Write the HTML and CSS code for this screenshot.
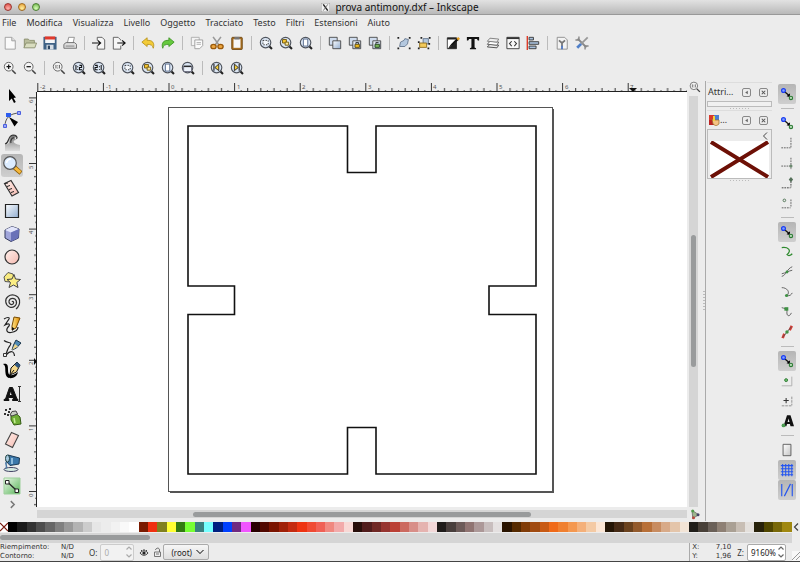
FILE: index.html
```html
<!DOCTYPE html>
<html lang="it">
<head>
<meta charset="utf-8">
<title>prova antimony.dxf – Inkscape</title>
<link rel="stylesheet" href="styles.css">
</head>
<body>
<svg class="sprite" aria-hidden="true">
  <defs>
    <linearGradient id="g-blue" x1="0" y1="0" x2="1" y2="1"><stop offset="0" stop-color="#fbfdff"/><stop offset="1" stop-color="#93aed0"/></linearGradient>
    <linearGradient id="g-grey" x1="0" y1="0" x2="1" y2="1"><stop offset="0" stop-color="#fff"/><stop offset="1" stop-color="#c4c4c4"/></linearGradient>
    <linearGradient id="g-pink" x1="0" y1="0" x2="1" y2="1"><stop offset="0" stop-color="#fff1ec"/><stop offset="1" stop-color="#f5b9b0"/></linearGradient>
    <linearGradient id="g-green" x1="0" y1="0" x2="1" y2="1"><stop offset="0" stop-color="#ecf8e9"/><stop offset="1" stop-color="#58b558"/></linearGradient>
    <linearGradient id="g-tweak" x1="0" y1="0" x2="0" y2="1"><stop offset="0" stop-color="#777"/><stop offset="1" stop-color="#ddd"/></linearGradient>
    <linearGradient id="g-pen" x1="0" y1="0" x2="1" y2="0"><stop offset="0" stop-color="#ffe58a"/><stop offset="1" stop-color="#e08a00"/></linearGradient>
  </defs>

  <symbol id="i-new" viewBox="0 0 16 16"><path d="M2.500 1.500H10L14 5.500V15H2.500Z" fill="#fafafa" stroke="#999"/><path d="M10 1.500V5.500H14" fill="#ddd" stroke="#999"/></symbol>
  <symbol id="i-open" viewBox="0 0 16 16"><path d="M1.500 13V3.500H6L7.500 5H13V8" fill="#b9bd9c" stroke="#888d6c"/><path d="M3.500 8H15.500L13.500 13.500H1Z" fill="#d9ddbf" stroke="#888d6c"/></symbol>
  <symbol id="i-save" viewBox="0 0 16 16"><path d="M0.500 1H15.500V15.500H0.500Z" fill="#3f6286"/><path d="M2.500 1H13.500V8H2.500Z" fill="#f4f6f8"/><path d="M2 0.500H14V4H2Z" fill="#e03a2c"/><path d="M4 10H12V15.500H4Z" fill="#d5dde5"/><path d="M5.500 11H8V15H5.500Z" fill="#2d4663"/></symbol>
  <symbol id="i-print" viewBox="0 0 16 16"><path d="M5 8L6.500 1.500H13L11.500 8" fill="#fff" stroke="#888"/><path d="M1 9.500L3.500 7.500H13L15.500 9.500V14H1Z" fill="#ddd" stroke="#666"/><path d="M3 11.500H13" stroke="#777"/></symbol>
  <symbol id="i-import" viewBox="0 0 16 16"><path d="M6 5V1.500H11.500L14.500 4.500V15H6V11" fill="#f6f6f6" stroke="#555"/><path d="M0 8H9M6.500 5L9.800 8L6.500 11" fill="none" stroke="#111" stroke-width="1.400"/></symbol>
  <symbol id="i-export" viewBox="0 0 16 16"><path d="M10 5V4.500L7 1.500H1.500V15H10V11" fill="#f6f6f6" stroke="#555"/><path d="M6 8H14M11.500 5L15 8L11.500 11" fill="none" stroke="#111" stroke-width="1.400"/></symbol>
  <symbol id="i-undo" viewBox="0 0 16 16"><path d="M1 7L7 2V5C13 4.500 16 8 14 14C13.500 10.500 11 9.500 7 9.500V12Z" fill="#f3cb37" stroke="#b8921c"/></symbol>
  <symbol id="i-redo" viewBox="0 0 16 16"><path d="M15 7L9 2V5C3 4.500 0 8 2 14C2.500 10.500 5 9.500 9 9.500V12Z" fill="#66c93e" stroke="#3f9525"/></symbol>
  <symbol id="i-copy" viewBox="0 0 16 16"><path d="M1.500 1.500H10.500V11H1.500Z" fill="#f4f4f4" stroke="#aaa"/><path d="M5.500 4.500H14.500V11L11 14.500H5.500Z" fill="#fbfbfb" stroke="#999"/><path d="M7.500 7.500H12.500M7.500 9.500H12.500" stroke="#aaa"/></symbol>
  <symbol id="i-cut" viewBox="0 0 16 16"><path d="M3.500 1L10 10M12.500 1L6 10" stroke="#999" stroke-width="1.800"/><ellipse cx="4" cy="12" rx="3" ry="2.500" fill="#eca640" stroke="#9a5a0c" stroke-width="1.500"/><ellipse cx="12" cy="12" rx="3" ry="2.500" fill="#eca640" stroke="#9a5a0c" stroke-width="1.500"/></symbol>
  <symbol id="i-paste" viewBox="0 0 16 16"><rect x="2" y="1.500" width="12" height="14" rx="1" fill="#a86e1f" stroke="#6d450f"/><path d="M4 3.500H12V13.500H4Z" fill="#f7f7f7"/><path d="M5 1H11V4H5Z" fill="#777"/></symbol>

  <symbol id="i-lens" viewBox="0 0 16 16"><path d="M11.500 11.500L14.800 14.800" stroke="#222" stroke-width="2.400"/><circle cx="7.500" cy="7.500" r="6" fill="#dbe6f4" stroke="#50555e" stroke-width="1.300"/></symbol>
  <symbol id="i-lens-light" viewBox="0 0 16 16"><path d="M10.500 10.500L14.500 14.500" stroke="#444" stroke-width="1.800"/><circle cx="6.500" cy="6.500" r="5" fill="#f4f4f4" stroke="#666" stroke-width="1.100"/></symbol>
  <symbol id="i-zsel" viewBox="0 0 16 16"><use href="#i-lens"/><rect x="4.500" y="5" width="6" height="5" fill="#f5f8fc" stroke="#222" stroke-dasharray="1.500 1.500"/></symbol>
  <symbol id="i-zdraw" viewBox="0 0 16 16"><use href="#i-lens"/><path d="M4 4H8.500V8H4Z" fill="#f4c330" stroke="#6e560d"/><path d="M7 7H11V10.500H7Z" fill="#fbe89a" stroke="#6e560d"/></symbol>
  <symbol id="i-zpage" viewBox="0 0 16 16"><use href="#i-lens"/><path d="M5 3.500H10V11.500H5Z" fill="#fff" stroke="#4b6186"/></symbol>
  <symbol id="i-zwidth" viewBox="0 0 16 16"><use href="#i-lens"/><path d="M3 6.500H12V12H3Z" fill="#edf3fb" stroke="#667"/><path d="M3 6H12" stroke="#222" stroke-width="1.500"/></symbol>
  <symbol id="i-zin" viewBox="0 0 16 16"><use href="#i-lens-light"/><path d="M4 6.500H9M6.500 4V9" stroke="#111" stroke-width="1.400"/></symbol>
  <symbol id="i-zout" viewBox="0 0 16 16"><use href="#i-lens-light"/><path d="M4 6.500H9" stroke="#111" stroke-width="1.400"/></symbol>
  <symbol id="i-z11" viewBox="0 0 16 16"><use href="#i-lens-light"/><path d="M4.500 4.500V8.500M8.500 4.500V8.500M6.500 5V6M6.500 7.500V8.500" stroke="#555"/></symbol>
  <symbol id="i-z12" viewBox="0 0 16 16"><use href="#i-lens"/><path d="M4.500 4.500V10.500M6.500 6V7M6.500 9V10M8.500 5H11V7.500H8.500V10H11.500" fill="none" stroke="#111" stroke-width="1.200"/></symbol>
  <symbol id="i-z21" viewBox="0 0 16 16"><use href="#i-lens"/><path d="M3.500 5H6V7.500H3.500V10H6.500M8.500 6V7M8.500 9V10M10.500 4.500V10.500" fill="none" stroke="#111" stroke-width="1.200"/></symbol>
  <symbol id="i-zprev" viewBox="0 0 16 16"><use href="#i-lens"/><path d="M10 3.500V11L5.500 7.500Z" fill="#f5cf3a" stroke="#222"/><path d="M4.500 3.500V11" stroke="#222" stroke-width="1.300"/></symbol>
  <symbol id="i-znext" viewBox="0 0 16 16"><use href="#i-lens"/><path d="M5 3.500V11L9.500 7.500Z" fill="#f5cf3a" stroke="#222"/><path d="M10.500 3.500V11" stroke="#222" stroke-width="1.300"/></symbol>

  <symbol id="i-dup" viewBox="0 0 16 16"><path d="M1.500 1.500H10.500V10.500H1.500Z" fill="#cfdcee" stroke="#444"/><path d="M5.500 5.500H14.500V14.500H5.500Z" fill="url(#g-blue)" stroke="#444"/></symbol>
  <symbol id="i-clone" viewBox="0 0 16 16"><use href="#i-dup"/><path d="M8 9.500H13V13H8Z" fill="#f0bc1c" stroke="#5c4709"/><path d="M9 9V7.500H12V9" fill="none" stroke="#222"/></symbol>
  <symbol id="i-unlink" viewBox="0 0 16 16"><use href="#i-dup"/><path d="M8 9.500H13V13H8Z" fill="#77b558" stroke="#24421a"/><path d="M9 9V7.500H12" fill="none" stroke="#222"/></symbol>
  <symbol id="i-group" viewBox="0 0 16 16"><path d="M3 12L4 7L8 5L9 3L13 4L12 9L9 12Z" fill="#b4c8df" stroke="#60728a"/><path d="M0.500 1H2.500V3H0.500ZM13.500 1H15.500V3H13.500ZM0.500 13H2.500V15H0.500ZM13.500 13H15.500V15H13.500Z" fill="#222"/></symbol>
  <symbol id="i-ungroup" viewBox="0 0 16 16"><path d="M7 3H13V9H7Z" fill="#b4c8df" stroke="#60728a"/><path d="M3 8H11V13H3Z" fill="#f2ca5c" stroke="#8c6a1a"/><path d="M1 6H3V8H1ZM4 1H6V3H4ZM13.500 1H15.500V3H13.500ZM1 13H3V15H1ZM12 13H14V15H12ZM13 8H15V10H13Z" fill="#222"/></symbol>
  <symbol id="i-fill" viewBox="0 0 16 16"><path d="M1.500 2H12V14.500H1.500Z" fill="#fff" stroke="#333"/><path d="M1.500 14.500L12 6V14.500ZM1.500 2H12V4H1.500Z" fill="#222"/><path d="M3 13L6 9L13 2L15 4L8 10Z" fill="#111"/><path d="M12 3L14 1L16 3L14 5Z" fill="#e9a427"/></symbol>
  <symbol id="i-text" viewBox="0 0 16 16"><path d="M1 1H15V5H13.500L12.500 3.500H9.800V13L11.500 14V15H4.500V14L6.200 13V3.500H3.500L2.500 5H1Z" fill="#111"/></symbol>
  <symbol id="i-layers" viewBox="0 0 16 16"><path d="M4.500 9.500L14.500 10.500L12.500 13.500L1.500 12.500Z" fill="#eee" stroke="#444"/><path d="M4.500 6L14.500 7L12.500 10.500L1.500 9.500Z" fill="#fff" stroke="#555"/><path d="M4.500 2.500L14.500 3.500L12.500 7L1.500 6Z" fill="#eee" stroke="#777"/></symbol>
  <symbol id="i-xml" viewBox="0 0 16 16"><path d="M1 1.500H15V14.500H1Z" fill="#f7f7f7" stroke="#333"/><path d="M1 2.500H15" stroke="#333" stroke-width="2"/><path d="M6.500 6L4 8.700L6.500 11.500M9.500 6L12 8.700L9.500 11.500" fill="none" stroke="#333" stroke-width="1.200"/></symbol>
  <symbol id="i-align" viewBox="0 0 16 16"><path d="M1.500 0V16" stroke="#dd3b27" stroke-width="1.600"/><path d="M3.500 1.500H8.500V4.500H3.500ZM3.500 6.500H14.500V9.500H3.500ZM3.500 11.500H11.500V14.500H3.500Z" fill="#a9c0dc" stroke="#333"/></symbol>
  <symbol id="i-docprops" viewBox="0 0 16 16"><path d="M2.500 1.500H11L14 4.500V15H2.500Z" fill="#f3f3f3" stroke="#888"/><path d="M4.500 5L8 8L11.500 5M8 8V12" fill="none" stroke="#777" stroke-width="2"/><path d="M8 11V15" stroke="#4772c0" stroke-width="2"/></symbol>
  <symbol id="i-prefs" viewBox="0 0 16 16"><path d="M3 3L13 13" stroke="#888" stroke-width="2.400"/><path d="M0.500 4.500H4.500V0.500M11.500 15.500V11.500H15.500" fill="none" stroke="#888" stroke-width="1.600"/><path d="M14.500 1.500L7 9" stroke="#999" stroke-width="2"/><path d="M7 9L2.500 13.500" stroke="#4f7fc9" stroke-width="3.200"/></symbol>

  <symbol id="t-select" viewBox="0 0 20 20"><path d="M7 3L7 15L9.800 12.500L12 17L13.800 16L11.500 12L14 11.500Z" fill="#000"/></symbol>
  <symbol id="t-node" viewBox="0 0 20 20"><path d="M3 17C3 10 7 4 18 4" fill="none" stroke="#555"/><path d="M4 4H9V8H4Z" fill="#2c5df0"/><path d="M15.500 2.500H18.500V5.500H15.500ZM1.500 15.500H4.500V18.500H1.500Z" fill="#9caaf5" stroke="#4b5fe0"/><path d="M7 8L16 13L12.500 17.500Z" fill="#000"/></symbol>
  <symbol id="t-tweak" viewBox="0 0 20 20"><path d="M3 13C8 12 7 9 8 6C9 2 14 2 15 6C13 4 12 6 14 8C10 8 11 12 18 13V19H3Z" fill="url(#g-tweak)"/><path d="M3 12C8 11 5 4 11 3C14 3 16 5 14.500 7M9 11C8 9 10 5 12 6" fill="none" stroke="#333" stroke-width="1.200"/></symbol>
  <symbol id="t-zoom" viewBox="0 0 20 20"><path d="M12 12L19 18" stroke="#8a5a00" stroke-width="4.500"/><path d="M12.500 12.300L18.500 17.500" stroke="#f6b83c" stroke-width="3"/><circle cx="8" cy="8" r="6.300" fill="#dcecff" stroke="#555" stroke-width="1.200"/><path d="M4.500 8C5 5 7 4 9 4" fill="none" stroke="#fff" stroke-width="1.500"/></symbol>
  <symbol id="t-measure" viewBox="0 0 20 20"><path d="M2.500 5.500L9 2.500L16.500 14.500L10 18Z" fill="url(#g-pink)" stroke="#333" stroke-width="1.200"/><path d="M3 5.500L6 5M5 8.500L8 7.500M7 11.500L10 10.500M9 14.500L12 13.500" stroke="#222"/></symbol>
  <symbol id="t-rect" viewBox="0 0 20 20"><path d="M3.500 3.500H16.500V16.500H3.500Z" fill="url(#g-blue)" stroke="#222" stroke-width="1.200"/></symbol>
  <symbol id="t-box" viewBox="0 0 20 20"><path d="M3 6L10 2.500L17 5L16.500 14L9 17.500L3 14Z" fill="#a0a5da" stroke="#33395c"/><path d="M3 6L10 2.500L17 5L9 8.500Z" fill="#e2e5fb"/><path d="M9 8.500L17 5L16.500 14L9 17.500Z" fill="#6a72b8"/></symbol>
  <symbol id="t-ellipse" viewBox="0 0 20 20"><circle cx="10" cy="10" r="7" fill="url(#g-pink)" stroke="#333" stroke-width="1.200"/></symbol>
  <symbol id="t-star" viewBox="0 0 20 20"><path d="M2 7L6 2.500L11 4L12 9L8 12L3 11.500Z" fill="#f8eb80" stroke="#555"/><path d="M12 4.500L13.500 9L18.500 9.500L14.800 12.500L16 17.500L11.500 15L7 17.500L8.500 12.500L5 9.500L10 9Z" fill="#fbee84" stroke="#444"/></symbol>
  <symbol id="t-spiral" viewBox="0 0 20 20"><path d="M10 10C11 8.500 12.500 10.500 11 12C9 13.500 6.500 11.500 7 9C8 5.500 13 5.500 14.300 9C15.500 13.500 11 16.500 7.500 15C3 13 2.500 7 6 4.500C10 1.500 16 3 17.500 8C18 12 16.500 15 14 17" fill="none" stroke="#333" stroke-width="1.200"/></symbol>
  <symbol id="t-pencil" viewBox="0 0 20 20"><path d="M2 4C5 2 8 2 7 4L3 10C7 8 8 9 7 11C3 15 5 18 9 17.500C13 17 16 15 16 12" fill="none" stroke="#222" stroke-width="1.200"/><path d="M12 2L18 3L14 13L10 15L10 11Z" fill="url(#g-pen)" stroke="#7a4b00"/><path d="M10 12L12.500 13.500L10 16Z" fill="#111"/></symbol>
  <symbol id="t-bezier" viewBox="0 0 20 20"><path d="M2 2.500C6 6 12 3 7 9C5 12 5 14 4 16M4 17C9 12 12 13 12.500 18" fill="none" stroke="#222" stroke-width="1.200"/><path d="M1.500 15.500H4.500V18.500H1.500Z" fill="#eee" stroke="#333"/><path d="M14 2L19 5L14.500 10L10 12L11.500 7Z" fill="#4f8ab5" stroke="#1d374c"/><path d="M13 6L16 8.500L10 12Z" fill="#efd58a"/></symbol>
  <symbol id="t-callig" viewBox="0 0 20 20"><path d="M1 3C6 2 6 5 6 9C6 15 9 16 16 11C15 18 4 20 3.500 12C3 7 4 5 1 3Z" fill="#000"/><path d="M15 1L18 4L14.500 11L8 14L9 7Z" fill="#f4d78a" stroke="#111"/><path d="M15 1L18.500 4L16 7L12.500 4Z" fill="#2f557e"/><path d="M8 14L12 9" stroke="#111"/></symbol>
  <symbol id="t-text" viewBox="0 0 20 20"><path d="M2 16.500H7V15.500L6 15L6.500 13.500H11L11.500 15L10.500 15.500V16.500H16V15.500L15 15L10.500 3.500H7.500L3.500 15L2 15.500ZM7.200 11.500L8.700 6.500L10.300 11.500Z" fill="#111" stroke="#111"/><path d="M16 2.500H19M17.500 2.500V17.500M16 17.500H19" stroke="#333"/></symbol>
  <symbol id="t-spray" viewBox="0 0 20 20"><path d="M3 2H5V4H3ZM6 4H8V6H6ZM2 6H4V8H2ZM7 1H9V3H7ZM10 5H11V7H10ZM5 7H7V9H5Z" fill="#333"/><path d="M9 9L14 6.500L18 10L19 17L12 18L9 13Z" fill="#6fae35" stroke="#345b13"/><path d="M8 8L10 4.500L14 4L15.500 7L10 9Z" fill="#c9cfc4" stroke="#444"/><path d="M12 11L13 16" stroke="#c6ec97" stroke-width="1.500"/></symbol>
  <symbol id="t-eraser" viewBox="0 0 20 20"><path d="M9.500 2.500L16.500 5.500L10.500 17.500L3.500 14Z" fill="url(#g-pink)" stroke="#444" stroke-width="1.100"/></symbol>
  <symbol id="t-bucket" viewBox="0 0 20 20"><ellipse cx="9" cy="16.500" rx="7" ry="2" fill="#d5ebe2" stroke="#446"/><path d="M5 8C2 11 6 12 4 15.500" fill="none" stroke="#4c7ba6" stroke-width="1.500"/><path d="M6 2L17.500 5L17 11L8 12.500L4 8Z" fill="#3b77aa" stroke="#1d3c58"/><ellipse cx="5.500" cy="5.500" rx="2" ry="3.500" fill="#a8cbe2" stroke="#244"/><path d="M10 5L10 11" stroke="#8dbbdc" stroke-width="2"/></symbol>
  <symbol id="t-connector" viewBox="0 0 20 20"><path d="M2 2H18V18H2Z" fill="url(#g-green)" stroke="#9ccf9a"/><path d="M6.500 7L13.500 13.500" stroke="#222" stroke-width="1.300"/><path d="M3.500 4.500H7V8H3.500ZM13 13H16.500V16.500H13Z" fill="#fff" stroke="#222"/></symbol>

  <symbol id="s-snap" viewBox="0 0 16 16"><circle cx="4" cy="4" r="2.200" fill="#7da0ff" stroke="#1c3df0" stroke-width="1.400"/><path d="M6 6L10 9.500" stroke="#111" stroke-width="1.400"/><path d="M11.500 7L11 11.500L7.500 10.500Z" fill="#000"/><circle cx="12.500" cy="12.500" r="1.900" fill="#b9dcb9" stroke="#2c7a34" stroke-width="1.300"/></symbol>
  <symbol id="s-bbox" viewBox="0 0 16 16"><path d="M1.500 13.500H12M12.500 2V13" stroke="#555" stroke-dasharray="2 1" fill="none"/></symbol>
  <symbol id="s-edge" viewBox="0 0 16 16"><path d="M1.500 11.500H12M12.500 2V15" stroke="#555" stroke-dasharray="2 1" fill="none"/><circle cx="12.500" cy="11.500" r="1.800" fill="#6c8a70"/></symbol>
  <symbol id="s-corner" viewBox="0 0 16 16"><path d="M2 13.500H12M12.500 6V13" stroke="#333" stroke-dasharray="2 1" fill="none"/><path d="M12.500 1L15 4L12.500 7L10 4Z" fill="#55705a"/></symbol>
  <symbol id="s-mid" viewBox="0 0 16 16"><path d="M2 13.500H12M12.500 4V13" stroke="#555" stroke-dasharray="2 1" fill="none"/><circle cx="5" cy="5" r="1.500" fill="none" stroke="#456b4a"/></symbol>
  <symbol id="s-path" viewBox="0 0 16 16"><path d="M2 3C9 2 14 6 8 11C10 13 12 12 14 10" fill="none" stroke="#2e8a2e" stroke-width="1.400"/></symbol>
  <symbol id="s-inter" viewBox="0 0 16 16"><path d="M2 13C7 12 8 4 14 2M2 10C7 9 9 7 14 6" fill="none" stroke="#555"/><circle cx="8" cy="8" r="1.600" fill="#3f9144"/></symbol>
  <symbol id="s-cusp" viewBox="0 0 16 16"><path d="M2 3C8 3 12 8 8 12C11 13 13 11 14 9" fill="none" stroke="#555"/><circle cx="7.500" cy="12" r="1.800" fill="#3f9144"/></symbol>
  <symbol id="s-smooth" viewBox="0 0 16 16"><path d="M2 3C5 4 8 4 8 7C7 13 11 14 13 9" fill="none" stroke="#555"/><path d="M5 2.500H9.500V6.500H5Z" fill="#3f9144"/></symbol>
  <symbol id="s-line" viewBox="0 0 16 16"><path d="M3 15L5 10M11 6L13.500 1" fill="none" stroke="#d63a33" stroke-width="3"/><path d="M3 14L13 2" stroke="#555"/><circle cx="8" cy="8" r="2" fill="#3f9144"/></symbol>
  <symbol id="s-center" viewBox="0 0 16 16"><path d="M2 13.500H13.500V3" fill="none" stroke="#aaa"/><circle cx="7" cy="7" r="1.700" fill="#6bbb6b" stroke="#2e7a34"/></symbol>
  <symbol id="s-rot" viewBox="0 0 16 16"><path d="M2 13.500H13M13.500 3V13" fill="none" stroke="#888" stroke-dasharray="3 1"/><path d="M4 7.500H10M7 4.500V10.500" stroke="#333" stroke-width="1.200"/></symbol>
  <symbol id="s-text" viewBox="0 0 16 16"><path d="M4 14L8 1.500H12L16 14H12L11.300 11.500H8L7.300 14ZM8.700 9H10.800L9.800 5Z" fill="#111" fill-rule="evenodd"/><circle cx="4" cy="13" r="2.200" fill="#4a9c50"/></symbol>
  <symbol id="s-page" viewBox="0 0 16 16"><path d="M3.500 1.500H12.500V14.500H3.500Z" fill="url(#g-grey)" stroke="#555"/></symbol>
  <symbol id="s-grid" viewBox="0 0 16 16"><path d="M1 3H15M1 6.500H15M1 10H15M1 13.500H15M3 1V15M6.500 1V15M10 1V15M13.500 1V15" stroke="#2455f0" stroke-width="1.200"/></symbol>
  <symbol id="s-guide" viewBox="0 0 16 16"><path d="M2 1V15M14 1V15M5 15L12 1" stroke="#2455f0" stroke-width="1.300" fill="none"/></symbol>
</svg>

<header class="titlebar">
  <div class="lights">
    <button class="light light-close" aria-label="Chiudi"></button>
    <button class="light light-min" aria-label="Riduci"></button>
    <button class="light light-max" aria-label="Ingrandisci"></button>
  </div>
  <h1 class="title"><svg class="x-logo" viewBox="0 0 10 10"><path d="M0 0H10V10H0Z" fill="#f3f3f3" stroke="#999"/><path d="M2.500 1.500L7.500 8.500" stroke="#222" stroke-width="1.600"/><path d="M7.500 1.500L2.500 8.500" stroke="#555" stroke-width=".8"/></svg>prova antimony.dxf – Inkscape</h1>
</header>

<nav class="menubar">
  <button>File</button><button>Modifica</button><button>Visualizza</button><button>Livello</button><button>Oggetto</button><button>Tracciato</button><button>Testo</button><button>Filtri</button><button>Estensioni</button><button>Aiuto</button>
</nav>

<div class="toolbar" role="toolbar" aria-label="Comandi">
  <button aria-label="Nuovo"><svg><use href="#i-new"/></svg></button>
  <button aria-label="Apri"><svg><use href="#i-open"/></svg></button>
  <button aria-label="Salva"><svg><use href="#i-save"/></svg></button>
  <button aria-label="Stampa"><svg><use href="#i-print"/></svg></button>
  <i class="sep"></i>
  <button aria-label="Importa"><svg><use href="#i-import"/></svg></button>
  <button aria-label="Esporta"><svg><use href="#i-export"/></svg></button>
  <i class="sep"></i>
  <button aria-label="Annulla"><svg><use href="#i-undo"/></svg></button>
  <button aria-label="Ripeti"><svg><use href="#i-redo"/></svg></button>
  <i class="sep"></i>
  <button aria-label="Copia"><svg><use href="#i-copy"/></svg></button>
  <button aria-label="Taglia"><svg><use href="#i-cut"/></svg></button>
  <button aria-label="Incolla"><svg><use href="#i-paste"/></svg></button>
  <i class="sep"></i>
  <button aria-label="Zoom selezione"><svg><use href="#i-zsel"/></svg></button>
  <button aria-label="Zoom disegno"><svg><use href="#i-zdraw"/></svg></button>
  <button aria-label="Zoom pagina"><svg><use href="#i-zpage"/></svg></button>
  <i class="sep"></i>
  <button aria-label="Duplica"><svg><use href="#i-dup"/></svg></button>
  <button aria-label="Clona"><svg><use href="#i-clone"/></svg></button>
  <button aria-label="Scollega clone"><svg><use href="#i-unlink"/></svg></button>
  <i class="sep"></i>
  <button aria-label="Raggruppa"><svg><use href="#i-group"/></svg></button>
  <button aria-label="Dividi"><svg><use href="#i-ungroup"/></svg></button>
  <i class="sep"></i>
  <button aria-label="Riempimento e contorni"><svg><use href="#i-fill"/></svg></button>
  <button aria-label="Testo e carattere"><svg><use href="#i-text"/></svg></button>
  <button aria-label="Livelli"><svg><use href="#i-layers"/></svg></button>
  <button aria-label="Editor XML"><svg><use href="#i-xml"/></svg></button>
  <button aria-label="Allinea"><svg><use href="#i-align"/></svg></button>
  <i class="sep"></i>
  <button aria-label="Proprietà documento"><svg><use href="#i-docprops"/></svg></button>
  <button aria-label="Preferenze"><svg><use href="#i-prefs"/></svg></button>
</div>

<div class="toolbar toolbar-zoom" role="toolbar" aria-label="Zoom">
  <button aria-label="Ingrandisci"><svg><use href="#i-zin"/></svg></button>
  <button aria-label="Rimpicciolisci"><svg><use href="#i-zout"/></svg></button>
  <i class="sep"></i>
  <button aria-label="Zoom 1:1"><svg><use href="#i-z11"/></svg></button>
  <button aria-label="Zoom 1:2"><svg><use href="#i-z12"/></svg></button>
  <button aria-label="Zoom 2:1"><svg><use href="#i-z21"/></svg></button>
  <i class="sep"></i>
  <button aria-label="Selezione"><svg><use href="#i-zsel"/></svg></button>
  <button aria-label="Disegno"><svg><use href="#i-zdraw"/></svg></button>
  <button aria-label="Pagina"><svg><use href="#i-zpage"/></svg></button>
  <button aria-label="Larghezza pagina"><svg><use href="#i-zwidth"/></svg></button>
  <i class="sep"></i>
  <button aria-label="Zoom precedente"><svg><use href="#i-zprev"/></svg></button>
  <button aria-label="Zoom successivo"><svg><use href="#i-znext"/></svg></button>
</div>

<main class="main">
  <div class="toolbox" role="toolbar" aria-label="Strumenti">
    <button aria-label="Selettore"><svg><use href="#t-select"/></svg></button>
    <button aria-label="Nodi"><svg><use href="#t-node"/></svg></button>
    <button aria-label="Ritocco"><svg><use href="#t-tweak"/></svg></button>
    <button class="active" aria-label="Zoom"><svg><use href="#t-zoom"/></svg></button>
    <button aria-label="Misura"><svg><use href="#t-measure"/></svg></button>
    <button aria-label="Rettangolo"><svg><use href="#t-rect"/></svg></button>
    <button aria-label="Solido 3D"><svg><use href="#t-box"/></svg></button>
    <button aria-label="Ellisse"><svg><use href="#t-ellipse"/></svg></button>
    <button aria-label="Stella"><svg><use href="#t-star"/></svg></button>
    <button aria-label="Spirale"><svg><use href="#t-spiral"/></svg></button>
    <button aria-label="Mano libera"><svg><use href="#t-pencil"/></svg></button>
    <button aria-label="Penna"><svg><use href="#t-bezier"/></svg></button>
    <button aria-label="Pennino"><svg><use href="#t-callig"/></svg></button>
    <button aria-label="Testo"><svg><use href="#t-text"/></svg></button>
    <button aria-label="Spray"><svg><use href="#t-spray"/></svg></button>
    <button aria-label="Gomma"><svg><use href="#t-eraser"/></svg></button>
    <button aria-label="Secchiello"><svg><use href="#t-bucket"/></svg></button>
    <button aria-label="Connettore"><svg><use href="#t-connector"/></svg></button>
    <button class="more" aria-label="Altri strumenti"><svg viewBox="0 0 8 8"><path d="M2.500 1L5.500 4L2.500 7" fill="none" stroke="#777" stroke-width="1.300"/></svg></button>
  </div>

  <div class="desk">
    <svg class="ruler-h">
      <defs><pattern id="ticks-h" x="0.300" y="0" width="65.600" height="11" patternUnits="userSpaceOnUse"><path d="M.5 2V11M13.600 7V11M26.700 7V11M39.900 7V11M53 7V11" stroke="#333" fill="none"/><path d="M7.100 9V11M20.200 9V11M33.300 9V11M46.400 9V11M59.500 9V11" stroke="#555" fill="none"/></pattern></defs>
      <rect width="100%" height="11" fill="url(#ticks-h)"/>
      <rect y="10" width="100%" height="1" fill="#222"/>
      <text x="3" y="8">-2</text><text x="69" y="8">-1</text><text x="134" y="8">0</text><text x="200" y="8">1</text><text x="265" y="8">2</text><text x="331" y="8">3</text><text x="396" y="8">4</text><text x="462" y="8">5</text><text x="528" y="8">6</text><text x="593" y="8">7</text>
      <path d="M592 7H600L596 11Z" fill="#111"/>
    </svg>
    <button class="corner" aria-label="Zoom finestra"><svg><use href="#i-z11"/></svg></button>

    <svg class="ruler-v">
      <defs><pattern id="ticks-v" x="0" y="5.400" width="10" height="65.600" patternUnits="userSpaceOnUse"><path d="M2 .5H10M7 13.600H10M7 26.700H10M7 39.900H10M7 53H10" stroke="#333" fill="none"/><path d="M8 7.100H10M8 20.200H10M8 33.300H10M8 46.400H10M8 59.500H10" stroke="#555" fill="none"/></pattern></defs>
      <rect width="10" height="100%" fill="url(#ticks-v)"/>
      <rect x="9" width="1" height="100%" fill="#222"/>
      <g><text transform="translate(6 11) rotate(-90)">6</text><text transform="translate(6 77) rotate(-90)">5</text><text transform="translate(6 142) rotate(-90)">4</text><text transform="translate(6 208) rotate(-90)">3</text><text transform="translate(6 273) rotate(-90)">2</text><text transform="translate(6 339) rotate(-90)">1</text><text transform="translate(6 405) rotate(-90)">0</text></g>
      <path d="M7 266V273L10 269.500Z" fill="#111"/>
    </svg>

    <svg class="canvas" role="img" aria-label="Disegno">
      <path d="M515 17H517V401H133V399H515Z" fill="#555"/>
      <rect x="131.500" y="15.500" width="384" height="384" fill="#fff" stroke="#555"/>
      <path d="M151 34H310.500V80.500H339V34H499V194H452V222.500H499V382H339V335.500H310.500V382H151V222.500H197.500V194H151Z" fill="none" stroke="#111" stroke-width="1.600"/>
    </svg>
    <div class="scroll-v"><div class="thumb"></div></div>

    <div class="scroll-h"><div class="thumb"></div></div>
    <button class="corner" aria-label="Gestione colore"><svg viewBox="0 0 16 16"><path d="M4 3L13 9L5 14Z" fill="#9db58e" stroke="#666"/><circle cx="5" cy="4" r="2" fill="#4f9a48"/><circle cx="12" cy="9" r="2" fill="#446"/><circle cx="6" cy="13" r="2" fill="#b5483e"/></svg></button>
  </div>

  <div class="grip-v" aria-hidden="true"></div>
  <aside class="dock">
    <section class="panel">
      <header class="panel-head"><h2>Attri…</h2>
        <button aria-label="Iconifica"><svg viewBox="0 0 8 8"><path d="M5.500 2V6L2.500 4Z" fill="#666"/></svg></button>
        <button aria-label="Chiudi pannello"><svg viewBox="0 0 8 8"><path d="M2 2L6 6M6 2L2 6" stroke="#555" stroke-width="1.200"/></svg></button>
      </header>
      <div class="panel-empty"></div>
    </section>
    <div class="grip-h"></div>
    <section class="panel">
      <header class="panel-head"><h2><svg class="panel-icon" viewBox="0 0 12 12"><path d="M1 1H6V6H1Z" fill="#d8382b"/><path d="M6 1H11V6H6Z" fill="#4d7fd0"/><path d="M1 6H6V11H1Z" fill="#b22"/><path d="M4 5L7 6L11 6L11 10L8 12L5 10Z" fill="#f5c383" stroke="#9a6a28" stroke-width=".7"/><path d="M6 2V7" stroke="#f4d23c" stroke-width="2"/></svg>…</h2>
        <button aria-label="Iconifica"><svg viewBox="0 0 8 8"><path d="M5.500 2V6L2.500 4Z" fill="#666"/></svg></button>
        <button aria-label="Chiudi pannello"><svg viewBox="0 0 8 8"><path d="M2 2L6 6M6 2L2 6" stroke="#555" stroke-width="1.200"/></svg></button>
      </header>
      <div class="swatch-panel">
        <button class="swatch-menu" aria-label="Menu campioni"><svg viewBox="0 0 8 8"><path d="M6 0.500L2.500 4L6 7.500" fill="none" stroke="#444"/></svg></button>
        <svg class="none-swatch" viewBox="0 0 60 38" preserveAspectRatio="none"><path d="M0 0H60V38H0Z" fill="#fff"/><path d="M1 1L59 37M59 1L1 37" stroke="#6d1006" stroke-width="4"/></svg>
      </div>
    </section>
    <div class="grip-h"></div>
  </aside>

  <div class="snapbar" role="toolbar" aria-label="Aggancio">
    <button class="active" aria-label="Attiva aggancio"><svg><use href="#s-snap"/></svg></button>
    <i class="sep"></i>
    <button aria-label="Riquadri"><svg><use href="#s-snap"/></svg></button>
    <button aria-label="Bordi riquadro"><svg><use href="#s-bbox"/></svg></button>
    <button aria-label="Angoli riquadro"><svg><use href="#s-edge"/></svg></button>
    <button aria-label="Punti medi bordi"><svg><use href="#s-corner"/></svg></button>
    <button aria-label="Centri riquadro"><svg><use href="#s-mid"/></svg></button>
    <i class="sep"></i>
    <button class="active" aria-label="Nodi e tracciati"><svg><use href="#s-snap"/></svg></button>
    <button aria-label="Tracciati"><svg><use href="#s-path"/></svg></button>
    <button aria-label="Intersezioni"><svg><use href="#s-inter"/></svg></button>
    <button aria-label="Nodi angolari"><svg><use href="#s-cusp"/></svg></button>
    <button aria-label="Nodi curvi"><svg><use href="#s-smooth"/></svg></button>
    <button aria-label="Punti medi"><svg><use href="#s-line"/></svg></button>
    <i class="sep"></i>
    <button class="active" aria-label="Altri punti"><svg><use href="#s-snap"/></svg></button>
    <button aria-label="Centri oggetti"><svg><use href="#s-center"/></svg></button>
    <button aria-label="Centri rotazione"><svg><use href="#s-rot"/></svg></button>
    <button aria-label="Linee base testo"><svg><use href="#s-text"/></svg></button>
    <i class="sep"></i>
    <button aria-label="Bordo pagina"><svg><use href="#s-page"/></svg></button>
    <button class="active" aria-label="Griglie"><svg><use href="#s-grid"/></svg></button>
    <button class="active" aria-label="Guide"><svg><use href="#s-guide"/></svg></button>
  </div>
</main>

<div class="palette">
  <button class="no-color" aria-label="Nessun colore"><svg viewBox="0 0 8 10"><path d="M0 0H8V10H0Z" fill="#fff"/><path d="M0 1L8 9M8 1L0 9" stroke="#7a1a10" stroke-width="1.200"/></svg></button>
  <div class="swatches" id="swatches"></div>
  <button class="palette-menu" aria-label="Tavolozze"><svg viewBox="0 0 8 8"><path d="M6 0.500L2.500 4L6 7.500" fill="none" stroke="#444" stroke-width="1.200"/></svg></button>
</div>
<div class="palette-scroll"><div class="thumb"></div></div>

<footer class="status">
  <dl class="style-info"><dt>Riempimento:</dt><dd>N/D</dd><dt>Contorno:</dt><dd>N/D</dd></dl>
  <label for="opacity">O:</label>
  <span class="spin spin-off"><input id="opacity" type="text" value="0" disabled><svg viewBox="0 0 8 14"><path d="M1.500 4.500L4 2L6.500 4.500M1.500 9.500L4 12L6.500 9.500" fill="none" stroke="#aaa" stroke-width="1.200"/></svg></span>
  <button class="layer-btn" aria-label="Visibilità livello"><svg viewBox="0 0 10 10"><path d="M1 6C3 3 7 3 9 6C7 9 3 9 1 6Z" fill="#ddd" stroke="#444"/><circle cx="5" cy="6" r="1.600" fill="#222"/><path d="M2 3L3 4M5 2V3.500M8 3L7 4" stroke="#444"/></svg></button>
  <button class="layer-btn" aria-label="Blocca livello"><svg viewBox="0 0 10 10"><path d="M2.500 5H8.500V9.500H2.500Z" fill="#eee" stroke="#777"/><path d="M3.500 3C4 0.500 7.500 0.500 7.500 3V5" fill="none" stroke="#666"/><path d="M4 7H7" stroke="#777"/></svg></button>
  <select class="layer" aria-label="Livello"><option>(root)</option></select>
  <span class="fill"></span>
  <dl class="coords"><dt>X:</dt><dd>7,10</dd><dt>Y:</dt><dd>1,96</dd></dl>
  <label for="zoom">Z:</label>
  <span class="spin"><input id="zoom" type="text" value="9160%"><svg viewBox="0 0 8 14"><path d="M1.500 4.500L4 2L6.500 4.500M1.500 9.500L4 12L6.500 9.500" fill="none" stroke="#666" stroke-width="1.200"/></svg></span>
  <svg class="resize" viewBox="0 0 8 10"><path d="M0 0H8V10H0Z" fill="#f8f8f8"/><path d="M0 9L8 1M4 9L8 5" stroke="#999"/></svg>
</footer>
<script src="palette.js"></script>
</body>
</html>
```

FILE: styles.css
```css
* { box-sizing: border-box; }

body {
  margin: 0;
  height: 100vh;
  display: flex;
  flex-direction: column;
  overflow: hidden;
  background: #ececec;
  color: #333;
  font-family: "Noto Sans", "Open Sans", sans-serif;
  font-size: 9px;
}

button {
  display: flex;
  align-items: center;
  justify-content: center;
  padding: 0;
  border: 0;
  background: none;
  color: inherit;
  font: inherit;
}

svg { display: block; flex: none; }
h1, h2, dl, dd { margin: 0; font-weight: normal; }
.sprite { position: absolute; width: 0; height: 0; }

/* Title bar */
.titlebar {
  display: grid;
  grid-template-columns: 1fr auto 1fr;
  align-items: center;
  height: 15px;
  background: linear-gradient(#e2e2e2, #b9b9b9);
  border-bottom: 1px solid #999;
}
.lights { display: flex; gap: 6px; padding-left: 4px; }
.light { width: 8px; height: 8px; border-radius: 50%; border: 1px solid; }
.light-close { background: radial-gradient(circle at 50% 75%, #ffb3ad, #d9433c); border-color: #9c3630; }
.light-min { background: radial-gradient(circle at 50% 75%, #fff0a0, #e59a2c); border-color: #a06a20; }
.light-max { background: radial-gradient(circle at 50% 75%, #d8ffb8, #6bb045); border-color: #4c8033; }
.title { display: flex; align-items: center; gap: 5px; font-size: 10px; line-height: 14px; color: #111; }
.x-logo { width: 9px; height: 9px; }

/* Menu */
.menubar { display: flex; align-items: center; gap: 10px; height: 16px; padding-left: 2px; }
.menubar button { line-height: 14px; }

/* Toolbars */
.toolbar { display: flex; align-items: center; height: 24px; }
.toolbar-zoom { height: 26px; }
.toolbar button { width: 20px; height: 20px; }
.toolbar svg { width: 14px; height: 14px; }
.toolbar .sep { width: 9px; height: 14px; background: linear-gradient(#bbb, #bbb) center / 1px 100% no-repeat; }

/* Main area */
.main { flex: 1; min-height: 0; display: flex; }

.toolbox { width: 27px; padding: 4px 0 10px 1px; display: flex; flex-direction: column; }
.toolbox button { flex: 1; min-height: 0; width: 22px; border-radius: 3px; }
.toolbox svg { width: 20px; height: 20px; }
.toolbox .more { flex: 0 0 14px; }
.toolbox .more svg { width: 9px; height: 9px; }
.active { background: linear-gradient(#b5b5b5, #cfcfcf); }

.desk {
  flex: 1;
  min-width: 0;
  display: grid;
  grid-template-columns: 10px 1fr 15px;
  grid-template-rows: 11px 1fr 14px;
}
.ruler-h { grid-column: 2; width: 100%; height: 11px; }
.ruler-v { grid-column: 1; grid-row: 2; width: 10px; height: 100%; }
.ruler-h text, .ruler-v text { font-size: 6px; fill: #555; }
.canvas { grid-column: 2; width: 100%; height: 100%; background: #fff; }
.corner svg { width: 12px; height: 12px; }

.thumb { border-radius: 3px; background: #999b9c; }
.scroll-v { margin: 4px 4px 0 2px; padding: 139px 2px 0; background: #d5d5d5; }
.scroll-v .thumb { height: 34%; min-height: 132px; }
.scroll-h { grid-column: 2; margin: 3px 0; padding: 2px 24% 1px; background: #d5d5d5; }
.scroll-h .thumb { height: 5px; }

.grip-v { width: 3px; display: flex; }
.grip-v::before {
  content: "";
  width: 2px;
  height: 20px;
  margin: auto;
  background: repeating-linear-gradient(#bbb 0 1px, transparent 1px 3px);
}

/* Dock */
.dock { width: 69px; border-left: 1px solid #aaa; padding: 1px 2px 0 1px; }
.panel { border-top: 1px solid #ddd; }
.panel-head { display: flex; align-items: center; gap: 8px; height: 18px; padding: 0 4px 0 1px; }
.panel-head h2 { flex: 1; display: flex; align-items: center; font-size: 9px; line-height: 12px; }
.panel-head button { width: 9px; height: 9px; border: 1px solid #888; border-radius: 2px; }
.panel-head button svg { width: 7px; height: 7px; }
.panel-icon { width: 12px; height: 12px; }
.panel-empty { height: 6px; border: 1px solid #bbb; background: #f0f0f0; }
.grip-h { height: 3px; margin: 0 23px; background: repeating-linear-gradient(90deg, #bbb 0 1px, transparent 1px 3px) center / 100% 1px no-repeat; }
.swatch-panel { border: 1px solid #bbb; padding: 0 2px; }
.swatch-menu { margin-left: auto; width: 8px; height: 11px; }
.swatch-menu svg { width: 8px; height: 8px; }
.none-swatch { width: 100%; height: 37px; }

/* Snap bar */
.snapbar { width: 26px; padding-top: 3px; display: flex; flex-direction: column; align-items: center; }
.snapbar button { width: 18px; height: 20px; flex: none; border-radius: 2px; }
.snapbar svg { width: 14px; height: 14px; }
.snapbar .sep { width: 13px; height: 9px; flex: none; background: linear-gradient(#bbb, #bbb) center / 100% 1px no-repeat; }

/* Palette */
.palette { display: flex; height: 12px; padding: 1px 0; background: #ececec; }
.no-color { width: 8px; }
.no-color svg { width: 8px; height: 10px; }
.swatches { flex: 1; display: flex; }
.swatch { flex: 1; height: 10px; }
.palette-menu { width: 9px; }
.palette-menu svg { width: 8px; height: 8px; }
.palette-scroll { height: 10px; margin-right: 8px; padding: 2px 0 3px; background: #d5d5d5; }
.palette-scroll .thumb { width: 19%; height: 5px; }

/* Status bar */
.status {
  display: flex;
  align-items: center;
  height: 19px;
  border-bottom: 1px solid #444;
  font-size: 8px;
}
.style-info, .coords { display: grid; font-family: "DejaVu Sans", sans-serif; font-size: 7px; line-height: 9px; }
.style-info { grid-template-columns: 61px 28px; }
.coords { grid-template-columns: 19px 20px; padding-left: 2px; margin-right: 6px; border-left: 1px solid #aaa; }
.coords dd { text-align: right; }
.spin { display: flex; align-items: center; height: 17px; border: 1px solid #aaa; border-radius: 2px; background: #fff; margin-left: 3px; }
.spin input { width: 29px; padding: 0 0 0 3px; border: 0; background: none; color: #222; font: inherit; }
.spin svg { width: 8px; height: 14px; }
.spin-off { background: #f2f2f2; border-color: #ccc; margin-right: 3px; }
.spin-off input { width: 24px; color: #aaa; }
.layer-btn { width: 13px; height: 16px; }
.layer-btn svg { width: 10px; height: 10px; }
.layer {
  appearance: none;
  width: 46px;
  height: 16px;
  padding: 0 0 0 7px;
  border: 1px solid #aaa;
  border-radius: 2px;
  background:
    linear-gradient(45deg, transparent 40%, #777 40% 65%, transparent 65%) 32px 5px / 4px 4px no-repeat,
    linear-gradient(-45deg, transparent 40%, #777 40% 65%, transparent 65%) 36px 5px / 4px 4px no-repeat,
    linear-gradient(#f6f6f6, #dedede);
  color: #222;
  font: inherit;
}
.fill { flex: 1; }
.resize { width: 8px; height: 10px; margin-left: 6px; align-self: flex-end; }
```

FILE: palette.js
```js
// Default palette, left to right.
const colors = `
000 1a1a1a 333 4d4d4d 666 808080 999 b3b3b3 ccc e6e6e6 ececec f2f2f2 f9f9f9 fff
7a1a00 f03010 808020 ffff33 337a10 77ff33 3a8080 77ffff 001f80 0040ff 702a80 f055ff
280000 500800 7a1400 a02008 c42a10 ee3311 f04a33 f06055 f08880 f2aaaa f8d8d5
280e0a 501c1c 702825 963430 bb4035 cc6a60 d88e88 e5b3b0 f2d8d8
1f1c1a 483e3c 6c5a58 907472 ac9898 c8bebe e4e0e0
2a1400 552a00 803c08 a04a10 c85a14 f06a18 f08030 f49850 f4b07a f4caa4 fbe6d5
241505 452a15 6a421e 935a2c b87038 c88c60 d8aa88 e4c5aa f2e4d6
201e1a 484038 6a6058 8e8074 aaa094 c8beb4 e4e0dc
28220a 504600 786808 a08810`.trim().split(/\s+/);

const strip = document.getElementById("swatches");
for (const color of colors) {
  const swatch = document.createElement("button");
  swatch.className = "swatch";
  swatch.setAttribute("aria-label", "#" + color);
  swatch.style.background = "#" + color;
  strip.append(swatch);
}
```
